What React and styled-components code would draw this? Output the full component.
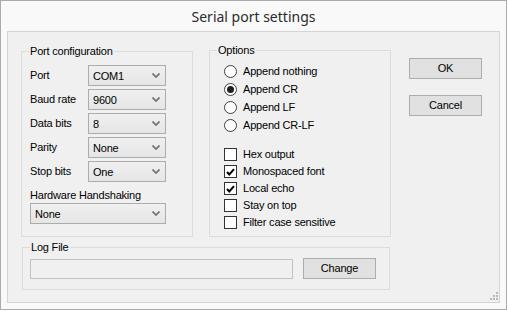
import React from "react";
import styled, { createGlobalStyle } from "styled-components";

const GlobalStyle = createGlobalStyle`
	body {
		margin: 0;
		background: #ffffff;
		font-family: "Liberation Sans", Arial, sans-serif;
		font-size: 11px;
		letter-spacing: -0.2px;
		color: #000;
	}
`;

const Window = styled.div`
	width: 507px;
	height: 310px;
	box-sizing: border-box;
	border: 1px solid #ababab;
	background-color: #f9f9f9;
	display: flex;
	flex-direction: column;
`;

const TitleBar = styled.div`
	height: 30px;
	display: flex;
	align-items: center;
	justify-content: center;
	font-family: "Noto Sans", "Open Sans", sans-serif;
	font-size: 14px;
	letter-spacing: 0;
	color: #2b2b2b;
	box-sizing: border-box;
`;

const Client = styled.div`
	position: relative;
	flex: 1;
	margin: 0 6px 6px 6px;
	border: 1px solid #d4d4d4;
	background-color: #f0f0f0;
	padding: 18px 0 0 13px;
	display: flex;
	flex-direction: column;
	align-items: flex-start;
`;

const TopRow = styled.div`
	display: flex;
	align-items: flex-start;
`;

const Group = styled.div`
	box-sizing: border-box;
	border: 1px solid #dcdcdc;
	width: ${(p) => p.$w}px;
	height: ${(p) => p.$h}px;
	margin: ${(p) => p.$m || "0"};
`;

const Legend = styled.div`
	width: fit-content;
	margin: -7px 0 0 7px;
	padding: 0 1px;
	line-height: 13px;
	background-color: #f0f0f0;
`;

const PortBody = styled.div`
	display: flex;
	flex-direction: column;
	gap: 3px;
	margin-top: 7px;
	padding-left: 8px;
`;

const FieldRow = styled.div`
	display: flex;
	align-items: center;
	height: 21px;
`;

const FieldLabel = styled.div`
	width: 58px;
	line-height: 13px;
`;

const BlockLabel = styled.div`
	line-height: 13px;
	margin-top: 4px;
	margin-bottom: 1px;
`;

const Combo = styled.div`
	box-sizing: border-box;
	width: ${(p) => p.$w || 78}px;
	height: 21px;
	border: 1px solid #acacac;
	background: linear-gradient(#f0f0f0, #e5e5e5);
	display: flex;
	align-items: center;
	justify-content: space-between;
	padding: 0 5px 0 4px;
`;

const Chevron = () => (
	<svg width="8" height="5" viewBox="0 0 8 5">
		<path d="M0.5 0.5 L4 4 L7.5 0.5" fill="none" stroke="#6d6d6d" strokeWidth="1.6" />
	</svg>
);

const OptionsBody = styled.div`
	padding-left: 14px;
	margin-top: 5px;
	display: flex;
	flex-direction: column;
`;

const ChoiceList = styled.div`
	display: flex;
	flex-direction: column;
	margin-top: ${(p) => p.$top || 0}px;
`;

const Choice = styled.div`
	display: flex;
	align-items: center;
	gap: 6px;
	height: ${(p) => p.$h}px;
	line-height: 13px;
`;

const Radio = styled.span`
	box-sizing: border-box;
	width: 13px;
	height: 13px;
	border-radius: 50%;
	border: 1px solid #3f3f3f;
	background: #fff;
	display: flex;
	align-items: center;
	justify-content: center;
	&::after {
		content: "";
		width: 7px;
		height: 7px;
		border-radius: 50%;
		background: ${(p) => (p.$on ? "#1f1f1f" : "transparent")};
	}
`;

const Box = styled.span`
	box-sizing: border-box;
	width: 13px;
	height: 13px;
	border: 1px solid #333;
	background: #fff;
	display: flex;
	align-items: center;
	justify-content: center;
`;

const Tick = () => (
	<svg width="9" height="8" viewBox="0 0 9 8">
		<path d="M1 4 L3.3 6.5 L8 1.2" fill="none" stroke="#000" strokeWidth="2" />
	</svg>
);

const ButtonColumn = styled.div`
	display: flex;
	flex-direction: column;
	gap: 16px;
	margin: 8px 0 0 18px;
`;

const Button = styled.div`
	box-sizing: border-box;
	width: 73px;
	height: 21px;
	border: 1px solid #adadad;
	background-color: #e1e1e1;
	display: flex;
	align-items: center;
	justify-content: center;
	line-height: 13px;
`;

const LogRow = styled.div`
	display: flex;
	align-items: flex-start;
	gap: 10px;
	margin-top: 4px;
	padding-left: 7px;
`;

const TextBox = styled.div`
	box-sizing: border-box;
	width: 263px;
	height: 20px;
	margin-top: 1px;
	border: 1px solid #c2c2c2;
	background-color: #f0f0f0;
`;

const Grip = styled.svg`
	position: absolute;
	right: 1px;
	bottom: 2px;
`;

const ports = [
	["Port", "COM1"],
	["Baud rate", "9600"],
	["Data bits", "8"],
	["Parity", "None"],
	["Stop bits", "One"],
];

const radios = [
	["Append nothing", false],
	["Append CR", true],
	["Append LF", false],
	["Append CR-LF", false],
];

const checks = [
	["Hex output", false],
	["Monospaced font", true],
	["Local echo", true],
	["Stay on top", false],
	["Filter case sensitive", false],
];

const App = () => {
	return (
		<>
			<GlobalStyle />
			<Window>
				<TitleBar>Serial port settings</TitleBar>
				<Client>
					<TopRow>
						<Group $w={172} $h={186} $m="1px 0 0 0">
							<Legend>Port configuration</Legend>
							<PortBody>
								{ports.map(([label, value]) => (
									<FieldRow key={label}>
										<FieldLabel>{label}</FieldLabel>
										<Combo>
											<span>{value}</span>
											<Chevron />
										</Combo>
									</FieldRow>
								))}
								<div>
									<BlockLabel>Hardware Handshaking</BlockLabel>
									<Combo $w={136}>
										<span>None</span>
										<Chevron />
									</Combo>
								</div>
							</PortBody>
						</Group>
						<Group $w={182} $h={187} $m="0 0 0 16px">
							<Legend>Options</Legend>
							<OptionsBody>
								<ChoiceList>
									{radios.map(([label, on]) => (
										<Choice key={label} $h={18}>
											<Radio $on={on} />
											{label}
										</Choice>
									))}
								</ChoiceList>
								<ChoiceList $top={12}>
									{checks.map(([label, on]) => (
										<Choice key={label} $h={17}>
											<Box>{on && <Tick />}</Box>
											{label}
										</Choice>
									))}
								</ChoiceList>
							</OptionsBody>
						</Group>
						<ButtonColumn>
							<Button>OK</Button>
							<Button>Cancel</Button>
						</ButtonColumn>
					</TopRow>
					<Group $w={368} $h={43} $m="10px 0 0 1px">
						<Legend>Log File</Legend>
						<LogRow>
							<TextBox />
							<Button>Change</Button>
						</LogRow>
					</Group>
					<Grip width="8" height="8" viewBox="0 0 8 8">
						<rect x="6" y="0" width="2" height="2" fill="#b9b9b9" />
						<rect x="3" y="3" width="2" height="2" fill="#b9b9b9" />
						<rect x="6" y="3" width="2" height="2" fill="#b9b9b9" />
						<rect x="0" y="6" width="2" height="2" fill="#b9b9b9" />
						<rect x="3" y="6" width="2" height="2" fill="#b9b9b9" />
						<rect x="6" y="6" width="2" height="2" fill="#b9b9b9" />
					</Grip>
				</Client>
			</Window>
		</>
	);
};

export default App;
